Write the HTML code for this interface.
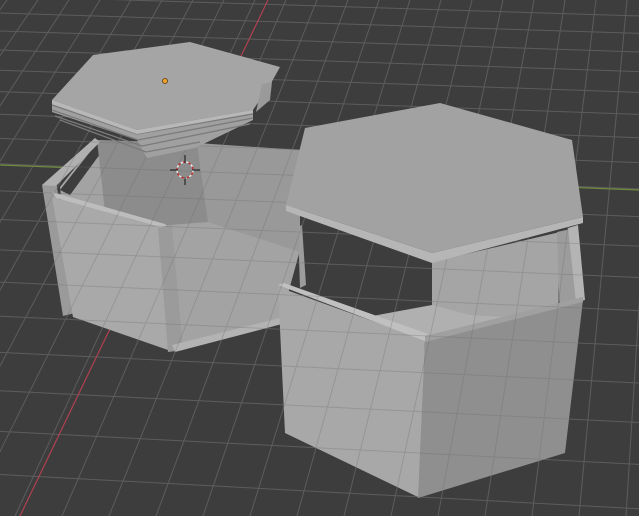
<!DOCTYPE html>
<html><head><meta charset="utf-8"><style>
html,body{margin:0;padding:0;background:#3d3d3d;width:639px;height:516px;overflow:hidden}
svg{display:block;overflow:hidden}
</style></head><body>
<svg id="s" width="639" height="516" viewBox="0 0 639 516" xmlns="http://www.w3.org/2000/svg">
<rect width="639" height="516" fill="#3d3d3d"/>
<g id="grid" stroke="#565656" stroke-width="1"></g>
<line x1="0" y1="165" x2="639" y2="190" stroke="#6f8a3e" stroke-width="1.2"/>
<line x1="268" y1="0" x2="20" y2="516" stroke="#b04050" stroke-width="1.2"/>

<polygon points="60,187 97,140 300,150 300,250 280,323 173,350 73,317" fill="#a3a3a3"/>
<polygon points="60,190 97,143 103,150 70,195" fill="#3d3d3d"/>
<polygon points="197,143 300,150 300,252 208,222" fill="#999"/>
<polygon points="97,140 197,143 208,222 107,230" fill="#8c8c8c"/>
<polygon points="42,185 56,180 75,313 63,316" fill="#9a9a9a"/>
<polygon points="42,185 95,138 100,142 56,186" fill="#b0b0b0"/>
<polygon points="52,197 162,228 168,350 73,317" fill="#a9a9a9"/>
<polygon points="52,192 165,224 170,230 56,198" fill="#bdbdbd"/>
<polygon points="158,228 172,225 183,350 168,352" fill="#9b9b9b"/>
<polygon points="172,345 280,318 282,324 175,352" fill="#b3b3b3"/>

<polygon points="432,262 560,232 558,322 432,320" fill="#a5a5a5"/>
<polygon points="557,232 575,228 583,300 560,318" fill="#9c9c9c"/>
<polygon points="568,228 578,225 585,300 576,302" fill="#b4b4b4"/>
<polygon points="367,317 432,305 470,315 558,320 425,337" fill="#b0b0b0"/>
<polygon points="298,227 302,225 306,285 300,288" fill="#9c9c9c"/>
<polygon points="278,287 425,340 420,498 285,433" fill="#a8a8a8"/>
<polygon points="278,285 284,283 428,334 425,341" fill="#c0c0c0"/>
<polygon points="425,340 583,300 565,453 418,498" fill="#8f8f8f"/>
<polygon points="425,336 583,297 583,302 425,342" fill="#a0a0a0"/>

<g id="grid2" stroke="#6a6a6a" stroke-width="1" opacity="0.3"></g>

<polygon points="52,112 137,140 147,158 195,148 253,120 253,110 137,130 52,100" fill="#a0a0a0"/>
<polyline points="52,105 137,134 253,114" fill="none" stroke="#7a7a7a" stroke-width="1.3"/>
<polyline points="52,110 138,140 253,118" fill="none" stroke="#7a7a7a" stroke-width="1.3"/>
<polyline points="55,116 142,146 250,124" fill="none" stroke="#7a7a7a" stroke-width="1.3"/>
<polyline points="60,120 146,152 200,142" fill="none" stroke="#7a7a7a" stroke-width="1.3"/>
<polygon points="52,100 93,55 190,42 280,67 270,85 253,110 137,130" fill="#a5a5a5"/>
<polygon points="262,84 272,82 270,100 256,112" fill="#9a9a9a"/>
<polygon points="52,100 137,130 253,110 253,113 137,134 52,104" fill="#b8b8b8"/>
<polygon points="286,205 432,253 583,217 583,223 432,263 286,211" fill="#b6b6b6"/>
<polygon points="286,205 305,128 440,103 572,140 583,217 432,253" fill="#a2a2a2"/>

<circle cx="165" cy="81" r="2.5" fill="#f0a030" stroke="#5a3a00" stroke-width="0.8"/>
<circle cx="185" cy="170" r="8" fill="none" stroke="#e8e8e8" stroke-width="1.5" stroke-dasharray="3,2.5"/>
<circle cx="185" cy="170" r="8" fill="none" stroke="#c03030" stroke-width="1.5" stroke-dasharray="2.5,3" stroke-dashoffset="3"/>
<line x1="170" y1="170" x2="178" y2="170" stroke="#111"/><line x1="192" y1="170" x2="200" y2="170" stroke="#111"/>
<line x1="185" y1="155" x2="185" y2="163" stroke="#111"/><line x1="185" y1="177" x2="185" y2="185" stroke="#111"/>
</svg>
<script>
var ns='http://www.w3.org/2000/svg';
function build(id){var g=document.getElementById(id);
function L(a,b,c,d){var l=document.createElementNS(ns,'line');l.setAttribute('x1',a);l.setAttribute('y1',b);l.setAttribute('x2',c);l.setAttribute('y2',d);g.appendChild(l);}
var y=-20,s=16;while(y<560){L(0,y,639,y+25+(y-165)*0.03);y+=s;s*=1.06;}
var vx=720,vy=-1000;
for(var x=-900;x<1500;x+=47){L(vx,vy,x+22,516);}
}
build('grid');build('grid2');
</script>
</body></html>
